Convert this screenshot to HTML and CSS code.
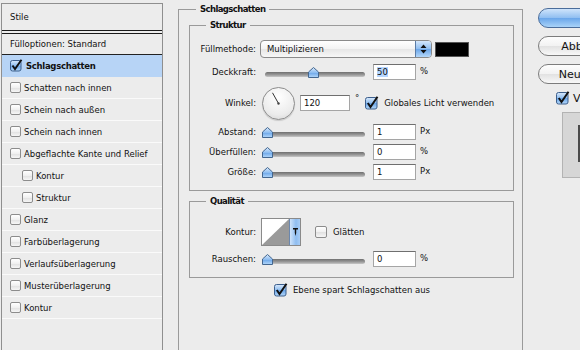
FILE: index.html
```html
<!DOCTYPE html>
<html lang="de">
<head>
    <meta charset="UTF-8">
    <title>Ebenenstil - Schlagschatten</title>
    <link rel="stylesheet" href="styles.css">
</head>
<body>
    <svg class="defs" width="0" height="0">
        <defs>
            <linearGradient id="aqua" x1="0" y1="0" x2="0" y2="1">
                <stop offset="0" stop-color="#d9e9fb"/>
                <stop offset="0.5" stop-color="#8ebdf0"/>
                <stop offset="0.51" stop-color="#6aa5e8"/>
                <stop offset="1" stop-color="#b4d8fa"/>
            </linearGradient>
        </defs>
    </svg>

    <div class="dialog">
        <!-- list of styles -->
        <div class="styles-list">
            <div class="list-title">Stile</div>
            <div class="list-blend">Fülloptionen: Standard</div>
            <div class="list-item selected">
                <svg class="check" width="13" height="13" viewBox="0 0 13 13"><rect x="0.5" y="1.5" width="10.5" height="10.5" rx="2" fill="url(#aqua)" stroke="#3d5f8c"/><path d="M2.5 6.5 L5 10 L11.5 0.8" fill="none" stroke="#111" stroke-width="1.9"/></svg>
                <b>Schlagschatten</b>
            </div>
            <div class="list-item"><span class="cb"></span>Schatten nach innen</div>
            <div class="list-item"><span class="cb"></span>Schein nach außen</div>
            <div class="list-item"><span class="cb"></span>Schein nach innen</div>
            <div class="list-item"><span class="cb"></span>Abgeflachte Kante und Relief</div>
            <div class="list-item sub"><span class="cb"></span>Kontur</div>
            <div class="list-item sub"><span class="cb"></span>Struktur</div>
            <div class="list-item"><span class="cb"></span>Glanz</div>
            <div class="list-item"><span class="cb"></span>Farbüberlagerung</div>
            <div class="list-item"><span class="cb"></span>Verlaufsüberlagerung</div>
            <div class="list-item"><span class="cb"></span>Musterüberlagerung</div>
            <div class="list-item"><span class="cb"></span>Kontur</div>
        </div>

        <!-- settings -->
        <fieldset class="group outer">
            <legend>Schlagschatten</legend>

            <fieldset class="group inner">
                <legend>Struktur</legend>

                <div class="row h22">
                    <label>Füllmethode:</label>
                    <div class="popup">
                        <span class="popup-text">Multiplizieren</span>
                        <span class="popup-arrows">
                            <svg width="7" height="10" viewBox="0 0 7 10"><path d="M3.5 0.5 L6.5 4 L0.5 4 Z M0.5 6 L6.5 6 L3.5 9.5 Z" fill="#111"/></svg>
                        </span>
                    </div>
                    <span class="swatch"></span>
                </div>

                <div class="row h24">
                    <label>Deckkraft:</label>
                    <div class="slider">
                        <div class="track"></div>
                        <svg class="thumb" style="left: 43px" width="11" height="11" viewBox="0 0 11 11"><path d="M0.5 5 L5.5 0.5 L10.5 5 L10.5 10.5 L0.5 10.5 Z" fill="url(#aqua)" stroke="#43668f"/></svg>
                    </div>
                    <div class="field"><span class="sel">50</span></div>
                    <span class="unit">%</span>
                </div>

                <div class="row h38">
                    <label>Winkel:</label>
                    <div class="dial">
                        <svg width="31" height="31" viewBox="0 0 31 31"><line x1="15.5" y1="15.5" x2="9.5" y2="4.8" stroke="#333" stroke-width="1"/><circle cx="15.5" cy="15.5" r="1.2" fill="#444"/></svg>
                    </div>
                    <div class="field wide">120</div>
                    <span class="deg">°</span>
                    <svg class="check big" width="14" height="14" viewBox="0 0 14 14"><rect x="0.5" y="1.5" width="11.5" height="11.5" rx="2" fill="url(#aqua)" stroke="#3d5f8c"/><path d="M2.8 7 L5.5 11 L12.5 0.8" fill="none" stroke="#111" stroke-width="2"/></svg>
                    <span class="check-label">Globales Licht verwenden</span>
                </div>

                <div class="row">
                    <label>Abstand:</label>
                    <div class="slider">
                        <div class="track"></div>
                        <svg class="thumb" style="left: -3px" width="11" height="11" viewBox="0 0 11 11"><path d="M0.5 5 L5.5 0.5 L10.5 5 L10.5 10.5 L0.5 10.5 Z" fill="url(#aqua)" stroke="#43668f"/></svg>
                    </div>
                    <div class="field">1</div>
                    <span class="unit">Px</span>
                </div>

                <div class="row">
                    <label>Überfüllen:</label>
                    <div class="slider">
                        <div class="track"></div>
                        <svg class="thumb" style="left: -3px" width="11" height="11" viewBox="0 0 11 11"><path d="M0.5 5 L5.5 0.5 L10.5 5 L10.5 10.5 L0.5 10.5 Z" fill="url(#aqua)" stroke="#43668f"/></svg>
                    </div>
                    <div class="field">0</div>
                    <span class="unit">%</span>
                </div>

                <div class="row">
                    <label>Größe:</label>
                    <div class="slider">
                        <div class="track"></div>
                        <svg class="thumb" style="left: -3px" width="11" height="11" viewBox="0 0 11 11"><path d="M0.5 5 L5.5 0.5 L10.5 5 L10.5 10.5 L0.5 10.5 Z" fill="url(#aqua)" stroke="#43668f"/></svg>
                    </div>
                    <div class="field">1</div>
                    <span class="unit">Px</span>
                </div>
            </fieldset>

            <fieldset class="group inner quality">
                <legend>Qualität</legend>

                <div class="row h32">
                    <label>Kontur:</label>
                    <div class="contour">
                        <svg width="27" height="26" viewBox="0 0 27 26"><rect width="27" height="26" fill="#fff"/><path d="M0 26 L27 0 L27 26 Z" fill="#9a9a9a"/></svg>
                        <span class="contour-btn">
                            <svg width="5" height="8" viewBox="0 0 5 8"><path d="M0 0 L5 0 L5 1.5 L3.2 1.5 L3.2 5 L2.5 8 L1.8 5 L1.8 1.5 L0 1.5 Z" fill="#111"/></svg>
                        </span>
                    </div>
                    <span class="cb big glatt"></span>
                    <span class="check-label">Glätten</span>
                </div>

                <div class="row h22">
                    <label>Rauschen:</label>
                    <div class="slider">
                        <div class="track"></div>
                        <svg class="thumb" style="left: -3px" width="11" height="11" viewBox="0 0 11 11"><path d="M0.5 5 L5.5 0.5 L10.5 5 L10.5 10.5 L0.5 10.5 Z" fill="url(#aqua)" stroke="#43668f"/></svg>
                    </div>
                    <div class="field">0</div>
                    <span class="unit">%</span>
                </div>
            </fieldset>

            <div class="layer-knocks">
                <svg class="check big" width="14" height="14" viewBox="0 0 14 14"><rect x="0.5" y="1.5" width="11.5" height="11.5" rx="2" fill="url(#aqua)" stroke="#3d5f8c"/><path d="M2.8 7 L5.5 11 L12.5 0.8" fill="none" stroke="#111" stroke-width="2"/></svg>
                <span class="check-label">Ebene spart Schlagschatten aus</span>
            </div>
        </fieldset>

        <!-- buttons -->
        <div class="actions">
            <button class="btn default">OK</button>
            <button class="btn">Abbrechen</button>
            <button class="btn">Neuer Stil...</button>
            <div class="preview-toggle">
                <svg class="check" width="14" height="14" viewBox="0 0 14 14"><rect x="0.5" y="1.5" width="11.5" height="11.5" rx="2" fill="url(#aqua)" stroke="#3d5f8c"/><path d="M2.8 7 L5.5 11 L12.5 0.8" fill="none" stroke="#111" stroke-width="2"/></svg>
                <span class="btn-label">Vorschau</span>
            </div>
            <div class="preview">
                <div class="preview-swatch"></div>
            </div>
        </div>
    </div>
</body>
</html>
```

FILE: styles.css
```css
* {
    box-sizing: border-box;
}

html,
body {
    margin: 0;
}

body {
    width: 580px;
    height: 350px;
    overflow: hidden;
    background-color: #ececec;
    font-family: "DejaVu Sans", sans-serif;
    font-size: 8.5px;
    color: #111;
}

.defs {
    display: block;
    height: 0;
}

.dialog {
    display: flex;
    align-items: flex-start;
}

/* left list */

.styles-list {
    flex-shrink: 0;
    width: 162px;
    height: 350px;
    margin: 3px 0 0 1px;
    border: 1px solid #8f8f8f;
    border-bottom: none;
}

.list-title {
    display: flex;
    align-items: center;
    height: 30px;
    padding-left: 8px;
    border-bottom: 4px double #1a1a1a;
}

.list-blend {
    display: flex;
    align-items: center;
    height: 21px;
    padding-left: 8px;
    border-bottom: 1px solid #222;
}

.list-item {
    display: flex;
    align-items: center;
    gap: 3px;
    height: 22px;
    padding-left: 8px;
    border-bottom: 1px solid #fafafa;
}

.list-item.sub {
    padding-left: 20px;
}

.list-item.selected {
    background-color: #b7d4f6;
    border-bottom-color: #b7d4f6;
}

.list-item b {
    letter-spacing: -0.3px;
}

.cb {
    flex-shrink: 0;
    width: 11px;
    height: 11px;
    border: 1px solid #8c8c8c;
    border-radius: 2px;
    background: linear-gradient(#fff, #f0f0f0 50%, #e0e0e0 51%, #f6f6f6);
}

.cb.big {
    width: 12px;
    height: 12px;
}

.check {
    flex-shrink: 0;
}

/* group boxes */

.group {
    margin: 0;
    border: 1px solid #9a9a9a;
    min-inline-size: 0;
}

.group legend {
    padding: 0 4px;
    line-height: 12px;
    font-weight: bold;
    letter-spacing: -0.6px;
}

.outer {
    flex-shrink: 0;
    width: 345px;
    height: 370px;
    margin: 3px 0 0 15px;
    padding: 4px 8px 0 10px;
}

.outer > legend {
    margin-left: 7px;
}

.inner {
    padding: 7px 0 8px 0;
}

.inner > legend {
    margin-left: 16px;
}

.quality {
    margin-top: 4px;
    padding: 9px 0 7px 0;
}

.row {
    display: flex;
    align-items: center;
    height: 20px;
}

.row.h22 {
    height: 22px;
}

.row.h24 {
    height: 24px;
}

.row.h32 {
    height: 32px;
}

.row.h38 {
    height: 38px;
}

.row label {
    flex-shrink: 0;
    width: 66px;
    text-align: right;
}

/* controls */

.popup {
    display: flex;
    align-items: center;
    width: 172px;
    height: 18px;
    margin-left: 4px;
    padding-left: 6px;
    border: 1px solid #8a8a8a;
    border-radius: 4px;
    background: linear-gradient(#fff, #f3f3f3 50%, #e6e6e6 51%, #f7f7f7);
    overflow: hidden;
}

.popup-text {
    flex: 1;
}

.popup-arrows {
    display: flex;
    align-items: center;
    justify-content: center;
    width: 16px;
    height: 100%;
    border-left: 1px solid #5b7ca6;
    background: linear-gradient(#d5e7fb, #8ebdf0 50%, #6aa5e8 51%, #b4d8fa);
}

.swatch {
    width: 34px;
    height: 15px;
    margin-left: 3px;
    background-color: #000;
    border: 1px solid #555;
}

.slider {
    position: relative;
    width: 100px;
    height: 11px;
    margin-left: 9px;
}

.track {
    height: 5px;
    margin-top: 5px;
    border-radius: 3px;
    background: linear-gradient(#6f6f6f, #9c9c9c 60%, #c8c8c8);
}

.thumb {
    position: absolute;
    top: 0;
}

.field {
    width: 43px;
    height: 16px;
    margin-left: 8px;
    padding-left: 3px;
    line-height: 14px;
    background-color: #fff;
    border: 1px solid #a5a5a5;
    border-top-color: #6f6f6f;
}

.field.wide {
    width: 50px;
    margin-left: 5px;
}

.sel {
    background-color: #b5d5ff;
}

.unit {
    margin: -2px 0 0 4px;
}

.deg {
    align-self: flex-start;
    margin: 9px 0 0 5px;
}

.dial {
    flex-shrink: 0;
    width: 33px;
    height: 33px;
    margin-left: 6px;
    padding: 0;
    border: 1px solid #8c8c8c;
    border-radius: 50%;
    background: radial-gradient(circle at 50% 30%, #fff, #ececec 65%, #d2d2d2);
    box-shadow: 0 1px 1px rgba(0, 0, 0, 0.15);
}

.dial svg {
    display: block;
}

.row .check.big {
    margin-left: 6px;
}

.check-label {
    margin-left: 5px;
}

.contour {
    display: flex;
    height: 28px;
    margin-left: 5px;
    border: 1px solid #8a8a8a;
}

.contour svg {
    display: block;
}

.contour-btn {
    display: flex;
    align-items: center;
    justify-content: center;
    width: 11px;
    border-left: 1px solid #6b87ad;
    background: linear-gradient(90deg, #cfe3fa, #8fbdf0 60%, #a8cdf6);
}

.glatt {
    margin-left: 14px;
}

.glatt + .check-label {
    margin-left: 6px;
}

.layer-knocks {
    display: flex;
    align-items: center;
    height: 18px;
    margin-top: 3px;
    padding-left: 85px;
}

/* right column */

.actions {
    flex-shrink: 0;
    width: 110px;
    margin-left: 15px;
    padding-top: 8px;
}

.btn {
    display: block;
    width: 106px;
    height: 20px;
    margin-bottom: 8px;
    padding: 0;
    border: 1px solid #7c7c7c;
    border-radius: 10px;
    background: linear-gradient(#fdfdfd, #f2f2f2 50%, #e2e2e2 51%, #f8f8f8);
    font-family: "DejaVu Sans", sans-serif;
    font-size: 11px;
    color: #111;
}

.btn.default {
    border-color: #4b6d9a;
    background: linear-gradient(#cfe4fb, #8fbef1 50%, #6aa6ea 51%, #a9d3f8);
}

.preview-toggle {
    display: flex;
    align-items: center;
    gap: 3px;
    margin: -1px 0 0 18px;
}

.btn-label {
    font-size: 11px;
}

.preview {
    width: 70px;
    height: 66px;
    margin: 7px 0 0 24px;
    padding: 12px 0 0 15px;
    background-color: #d6d6d6;
    border: 1px solid #b3b3b3;
}

.preview-swatch {
    width: 40px;
    height: 37px;
    background-color: #4a4a4a;
}
```
